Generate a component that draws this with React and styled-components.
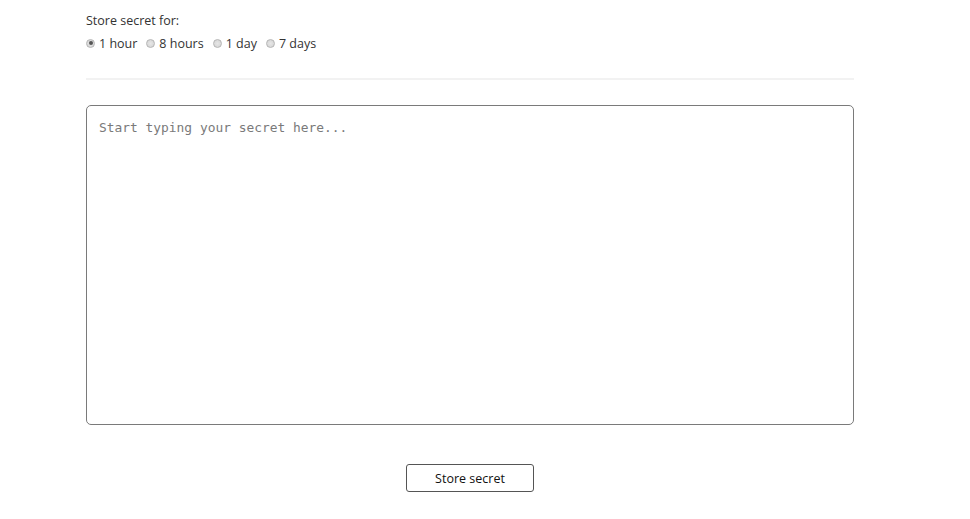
import React, {useState} from 'react'
import styled, {createGlobalStyle} from 'styled-components'

const GlobalStyle = createGlobalStyle`
    html, body {
        margin: 0;
        padding: 0;
        background: #fff;
    }
    body {
        font-family: "Open Sans", "Noto Sans", sans-serif;
        color: #333;
    }
`

const Page = styled.div`
    width: 768px;
    margin-left: 86px;
    padding-top: 12px;
`

const Label = styled.div`
    font-size: 12.5px;
    line-height: 18px;
    color: #333;
`

const Options = styled.div`
    display: flex;
    align-items: center;
    gap: 9px;
    margin-top: 4px;
    height: 18px;
`

const Option = styled.label`
    display: flex;
    align-items: center;
    gap: 4px;
    font-size: 12.5px;
    color: #333;
    cursor: pointer;
`

const Radio = styled.input.attrs({type: 'radio'})`
    appearance: none;
    margin: 0;
    width: 9px;
    height: 9px;
    border-radius: 50%;
    border: 1px solid #b5b5b5;
    background: radial-gradient(circle, #e6e6e6 0%, #d2d2d2 100%);
    box-sizing: border-box;
    position: relative;
    &:checked::after {
        content: "";
        position: absolute;
        left: 1.5px;
        top: 1.5px;
        width: 4px;
        height: 4px;
        border-radius: 50%;
        background: #555;
    }
`

const Divider = styled.hr`
    border: 0;
    border-top: 2px solid #f2f2f2;
    margin: 26px 0 25px;
`

const SecretInput = styled.textarea`
    display: block;
    width: 768px;
    height: 320px;
    box-sizing: border-box;
    border: 1px solid #7a7a7a;
    border-radius: 5px;
    padding: 13px 12px;
    resize: none;
    font-family: "DejaVu Sans Mono", "Liberation Mono", monospace;
    font-size: 12.9px;
    line-height: 17px;
    color: #333;
    outline: none;
    &::placeholder {
        color: #7a7a7a;
    }
`

const Actions = styled.div`
    display: flex;
    justify-content: center;
    margin-top: 39px;
`

const Button = styled.button`
    width: 128px;
    height: 28px;
    border: 1px solid #555;
    border-radius: 3px;
    background: #fff;
    font-family: "Open Sans", "Noto Sans", sans-serif;
    font-size: 12.5px;
    color: #111;
    cursor: pointer;
`

const durations = ['1 hour', '8 hours', '1 day', '7 days']

export default function App() {
    const [duration, setDuration] = useState('1 hour')
    const [secret, setSecret] = useState('')

    return (<>
        <GlobalStyle />
        <Page>
            <Label>Store secret for:</Label>
            <Options>
                {
                    durations.map((d) => (
                        <Option key={d}>
                            <Radio
                                name="duration"
                                checked={duration === d}
                                onChange={() => setDuration(d)}
                            />
                            {d}
                        </Option>
                    ))
                }
            </Options>
            <Divider />
            <SecretInput
                placeholder="Start typing your secret here..."
                value={secret}
                onChange={(e) => setSecret(e.target.value)}
            />
            <Actions>
                <Button>Store secret</Button>
            </Actions>
        </Page>
    </>)
}
